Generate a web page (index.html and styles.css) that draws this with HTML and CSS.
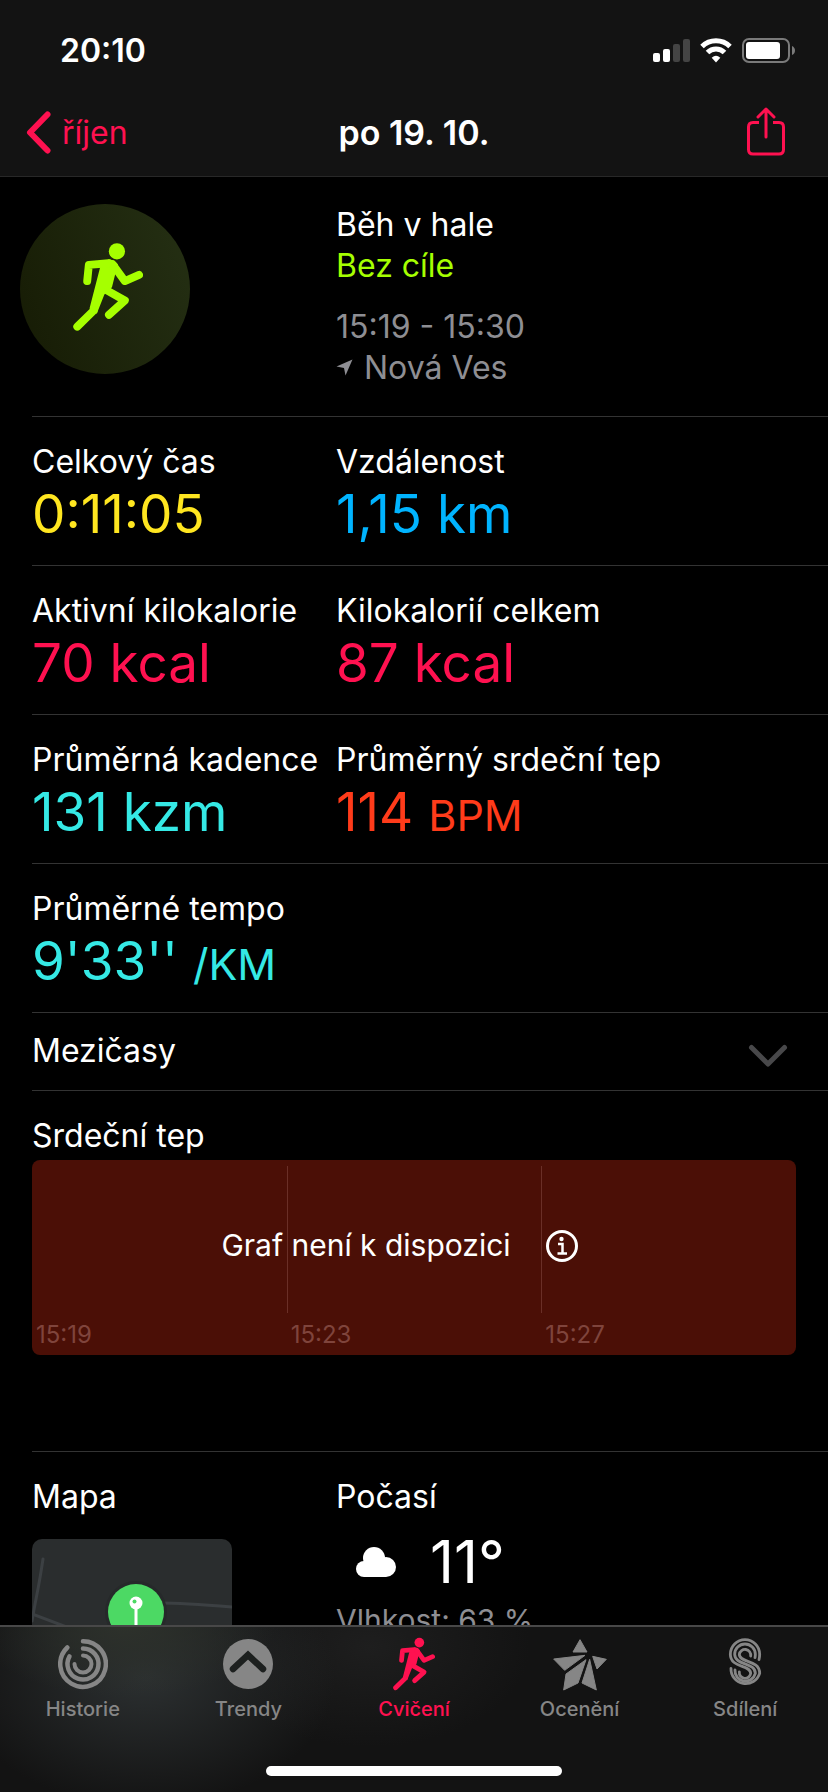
FILE: index.html
```
<!DOCTYPE html>
<html lang="cs">
<head>
  <meta charset="UTF-8">
  <meta name="viewport" content="width=device-width, initial-scale=1.0">
  <title>Cvičení</title>
  <link rel="stylesheet" href="styles.css">
</head>
<body>
  <!-- shared runner symbol -->
  <svg class="defs" aria-hidden="true">
    <symbol id="runner" viewBox="218 188 212 266">
      <circle cx="351" cy="213" r="24.500"/>
      <path d="M300 262L268 386L290 402L313 344L336 322L346 282L354 252Q342 238 326 237Z"/>
      <g fill="none" stroke="currentColor" stroke-width="24" stroke-linecap="round" stroke-linejoin="round">
        <path d="M261 303L266 254L326 249"/>
        <path d="M338 252L375 303L418 284"/>
        <path d="M322 332L375 362L327 405"/>
        <path d="M280 393L231 441"/>
      </g>
    </symbol>
  </svg>

  <header class="top">
    <div class="status">
      <span class="time">20:10</span>
      <div class="status-icons">
        <svg width="37" height="25" viewBox="0 0 37 25" fill="#fff">
          <rect x="0" y="15" width="7" height="9" rx="2"/>
          <rect x="10" y="11" width="7" height="13" rx="2"/>
          <rect x="20" y="6" width="7" height="18" rx="2" fill="#444"/>
          <rect x="30" y="1" width="7" height="23" rx="2" fill="#444"/>
        </svg>
        <svg width="32" height="25" viewBox="0 0 32 25" fill="none" stroke="#fff" stroke-width="5">
          <path d="M2 8.500A20 20 0 0 1 30 8.500"/>
          <path d="M7.500 14.500A12 12 0 0 1 24.500 14.500"/>
          <path d="M16 24.500L11.700 19.800Q16 15.500 20.300 19.800Z" fill="#fff" stroke="none"/>
        </svg>
        <svg width="53" height="25" viewBox="0 0 53 25">
          <rect x="1" y="1" width="46" height="23" rx="6" fill="none" stroke="#7a7a7a" stroke-width="2"/>
          <rect x="4" y="4" width="34" height="17" rx="3" fill="#fff"/>
          <path d="M50 8Q53 9.500 53 12.500T50 17Z" fill="#7a7a7a"/>
        </svg>
      </div>
    </div>
    <nav class="nav">
      <a class="back" href="#">
        <svg width="25" height="43" viewBox="0 0 25 43" fill="none" stroke="currentColor" stroke-width="6" stroke-linecap="round" stroke-linejoin="round"><path d="M21.500 3.500L4 21.500L21.500 39.500"/></svg>
        říjen
      </a>
      <h1>po 19. 10.</h1>
      <button class="share" aria-label="Sdílet">
        <svg width="40" height="50" viewBox="0 0 40 50" fill="none" stroke="currentColor" stroke-width="3" stroke-linecap="round" stroke-linejoin="round">
          <path d="M13 16.500H7Q2.500 16.500 2.500 21V43.500Q2.500 48 7 48H33Q37.500 48 37.500 43.500V21Q37.500 16.500 33 16.500H27" stroke-linecap="butt"/>
          <path d="M20 31V3M12 11L20 3L28 11"/>
        </svg>
      </button>
    </nav>
  </header>

  <main>
    <section class="summary">
      <div class="badge"><svg width="70" height="88"><use href="#runner"/></svg></div>
      <div class="info">
        <p>Běh v hale</p>
        <p class="goal">Bez cíle</p>
        <p class="muted hours">15:19 - 15:30</p>
        <p class="muted place">
          <svg width="17" height="17" viewBox="0 0 17 17" fill="currentColor"><path d="M16.500 0.500L9.500 16.500L8 9L0.500 7.500Z"/></svg>
          Nová Ves
        </p>
      </div>
    </section>

    <section class="row">
      <div><h2>Celkový čas</h2><p class="value yellow">0:11:05</p></div>
      <div><h2>Vzdálenost</h2><p class="value blue">1,15 km</p></div>
    </section>
    <section class="row">
      <div><h2>Aktivní kilokalorie</h2><p class="value pink">70 kcal</p></div>
      <div><h2>Kilokalorií celkem</h2><p class="value pink">87 kcal</p></div>
    </section>
    <section class="row">
      <div><h2>Průměrná kadence</h2><p class="value cyan">131 kzm</p></div>
      <div><h2>Průměrný srdeční tep</h2><p class="value red">114 <small>BPM</small></p></div>
    </section>
    <section class="row">
      <div><h2>Průměrné tempo</h2><p class="value cyan">9'33'' <small>/KM</small></p></div>
    </section>

    <button class="splits">
      Mezičasy
      <svg width="40" height="24" viewBox="0 0 40 24" fill="none" stroke="#48484a" stroke-width="5" stroke-linecap="round" stroke-linejoin="round"><path d="M3.500 3.500L20 20L36.500 3.500"/></svg>
    </button>

    <section class="heart">
      <h2>Srdeční tep</h2>
      <div class="chart">
        <div class="slot"><span>15:19</span></div>
        <div class="slot"><span>15:23</span></div>
        <div class="slot"><span>15:27</span></div>
        <div class="no-data">
          Graf není k dispozici
          <button aria-label="Informace">
            <svg width="34" height="34" viewBox="0 0 34 34" fill="none" stroke="#fff" stroke-width="3">
              <circle cx="17" cy="17" r="14.500"/>
              <circle cx="16.500" cy="10" r="2.200" fill="#fff" stroke="none"/>
              <path d="M13 15H17.500V24.500M12.500 24.500H22" stroke-width="2.500"/>
            </svg>
          </button>
        </div>
      </div>
    </section>

    <section class="row last">
      <div>
        <h2>Mapa</h2>
        <svg class="map" width="200" height="200" viewBox="0 0 200 200">
          <rect width="200" height="200" fill="#2a2d2e"/>
          <g fill="none" stroke="#3c4043" stroke-width="3" stroke-linecap="round">
            <path d="M11 20Q8 40 5 55T0 82"/>
            <path d="M0 75L40 90L80 102"/>
            <path d="M128 64Q150 64 200 68"/>
          </g>
          <circle cx="104" cy="73" r="31" fill="#26292a"/>
          <circle cx="104" cy="73" r="28" fill="#4cd964"/>
          <path d="M104 67V95" stroke="#fff" stroke-width="3"/>
          <circle cx="104" cy="64" r="6.500" fill="#fff"/>
          <circle cx="102.500" cy="62.500" r="2" fill="#4cd964"/>
        </svg>
      </div>
      <div>
        <h2>Počasí</h2>
        <p class="weather">
          <svg width="40" height="30" viewBox="0 0 40 30" fill="#fff"><circle cx="8" cy="22" r="8"/><circle cx="18" cy="11" r="11"/><circle cx="30" cy="20" r="10"/><rect x="8" y="14" width="22" height="16"/></svg>
          11°
        </p>
        <p class="muted humidity">Vlhkost: 63 %</p>
      </div>
    </section>
  </main>

  <footer>
    <nav class="tabs">
      <a href="#">
        <svg width="50" height="54" viewBox="-25 -27 50 54" fill="none" stroke="currentColor" stroke-width="4.500" stroke-linecap="round">
          <path d="M0 -22.800A22.800 22.800 0 1 1 -15.700 -16.500"/>
          <path d="M0 -15.500A15.500 15.500 0 1 1 -13.500 -7.600"/>
          <path d="M0 -8.500A8.500 8.500 0 1 1 -8.500 0" stroke-width="4"/>
        </svg>
        Historie
      </a>
      <a href="#">
        <svg width="50" height="54" viewBox="-25 -27 50 54">
          <circle r="25" fill="currentColor"/>
          <path d="M-15 5L0 -9L15 5" fill="none" stroke="#1d201f" stroke-width="6.500" stroke-linecap="round"/>
        </svg>
        Trendy
      </a>
      <a class="active" href="#">
        <svg width="42" height="54"><use href="#runner"/></svg>
        Cvičení
      </a>
      <a href="#">
        <svg width="54" height="54" viewBox="636 111 162 162" fill="currentColor" stroke="currentColor" stroke-width="3" stroke-linejoin="round">
          <path d="M717 119L738 156L696 156Z"/>
          <path d="M638 177L732 166L671 211Z"/>
          <path d="M735 179L711 249L668 270L675 222Z"/>
          <path d="M746 178L766 270L723 249Z"/>
          <path d="M755 169L796 178L768 207Z"/>
        </svg>
        Ocenění
      </a>
      <a href="#">
        <svg width="34" height="54" viewBox="1161 111 102 162" fill="none" stroke="currentColor" stroke-width="8.500" stroke-linecap="round">
          <path d="M1254 179Q1256 172 1256 163A44 44 0 0 0 1168 163C1168 205 1229 193 1229 220A17 17 0 0 1 1195 216"/>
          <path d="M1242 173Q1243 168 1243 163A31 31 0 0 0 1181 163C1181 197 1243 186 1243 220A31 31 0 0 1 1182 210"/>
          <path d="M1229 168A17 17 0 1 0 1195 163C1195 190 1256 178 1256 220A44 44 0 0 1 1170 205"/>
        </svg>
        Sdílení
      </a>
    </nav>
    <div class="home-bar"></div>
  </footer>
</body>
</html>
```
FILE: styles.css
```
* {
  box-sizing: border-box;
  margin: 0;
  padding: 0;
}
body {
  display: flex;
  flex-direction: column;
  height: 100vh;
  background: #000;
  color: #fff;
  font-family: Inter, "Liberation Sans", sans-serif;
  font-size: 32px;
  line-height: 41px;
}
svg {
  display: block;
  flex: none;
}
a {
  color: inherit;
  text-decoration: none;
}
button {
  border: 0;
  background: none;
  color: inherit;
  font: inherit;
}
h2 {
  font-size: inherit;
  font-weight: 400;
  white-space: nowrap;
}
.defs {
  position: absolute;
  width: 0;
  height: 0;
}
#runner {
  fill: currentColor;
}

/* header */
.top {
  flex: none;
  background: #131313;
  border-bottom: 1px solid #282828;
}
.status {
  display: flex;
  justify-content: space-between;
  align-items: center;
  height: 88px;
  padding: 12px 33px 0 60px;
}
.time {
  font-weight: 600;
}
.status-icons {
  display: flex;
  gap: 10px;
}
.nav {
  display: grid;
  grid-template-columns: 1fr auto 1fr;
  align-items: center;
  height: 88px;
  padding: 0 26px;
}
.nav h1 {
  font-size: 34px;
  font-weight: 600;
}
.back {
  display: flex;
  align-items: center;
  gap: 11px;
  color: #ff1150;
}
.share {
  justify-self: end;
  padding: 0 16px 3px 0;
  color: #ff1150;
}

/* content */
main {
  flex: 1;
  min-height: 0;
  overflow: hidden;
}
.summary {
  display: grid;
  grid-template-columns: 316px 1fr;
  padding: 27px 0 28px 20px;
}
.badge {
  display: flex;
  align-items: center;
  justify-content: center;
  width: 170px;
  height: 170px;
  padding: 0 0 4px 6px;
  border-radius: 50%;
  background: linear-gradient(70deg, #161b04, #253014);
  color: #a6ff00;
}
.goal {
  color: #a6ff00;
}
.muted {
  color: #8e8e93;
}
.hours {
  margin-top: 20px;
}
.place {
  display: flex;
  align-items: center;
  gap: 11px;
}
.row {
  display: grid;
  grid-template-columns: 304px 1fr;
  margin-left: 32px;
  padding: 24px 0 19px;
  border-top: 1px solid #333;
}
.value {
  font-size: 53px;
  line-height: 64px;
}
.value small {
  font-size: 43px;
  line-height: 1;
}
.yellow {
  color: #ffe620;
}
.blue {
  color: #00b4ff;
}
.pink {
  color: #ff1150;
}
.cyan {
  color: #35e9e5;
}
.red {
  color: #ff3b1a;
}
.splits {
  display: flex;
  justify-content: space-between;
  align-items: center;
  width: calc(100% - 32px);
  margin-left: 32px;
  padding: 17px 40px 19px 0;
  border-top: 1px solid #333;
}
.splits svg {
  margin-top: 10px;
}
.heart {
  margin-left: 32px;
  padding: 24px 32px 96px 0;
  border-top: 1px solid #333;
}
.chart {
  position: relative;
  display: grid;
  grid-template-columns: repeat(3, 1fr);
  height: 195px;
  margin-top: 4px;
  padding-top: 6px;
  border-radius: 8px;
  background: #4b0f06;
}
.slot {
  display: flex;
  flex-direction: column;
  color: #7f443c;
  font-size: 24px;
  line-height: 30px;
}
.slot::before {
  content: "";
  height: 147px;
  border-left: 1px solid #6a2f27;
}
.slot:first-child::before {
  border: 0;
}
.slot span {
  margin: 7px 0 0 4px;
}
.no-data {
  position: absolute;
  top: 0;
  left: 0;
  display: flex;
  align-items: center;
  justify-content: center;
  gap: 34px;
  width: 100%;
  height: 171px;
  padding-right: 28px;
  font-size: 30px;
}
.map {
  margin-top: 22px;
  border-radius: 10px;
}
.weather {
  display: flex;
  align-items: center;
  gap: 34px;
  margin-top: 13px;
  padding-left: 20px;
  font-size: 59px;
  line-height: 64px;
}
.humidity {
  margin-top: 6px;
  font-size: 30px;
}

/* tab bar */
footer {
  flex: none;
  height: 167px;
  border-top: 2px solid #484848;
  background:
    radial-gradient(ellipse 150px 70px at 125px 0, #2d312b, transparent),
    radial-gradient(ellipse 190px 130px at 145px 50px, #2c3031, transparent),
    radial-gradient(ellipse 160px 100px at 370px 20px, #1e1e1e, transparent),
    #131313;
}
.tabs {
  display: grid;
  grid-template-columns: repeat(5, 1fr);
  height: 139px;
  padding-top: 10px;
}
.tabs a {
  display: flex;
  flex-direction: column;
  align-items: center;
  gap: 6px;
  color: #868686;
  font-size: 20px;
  font-weight: 500;
  line-height: 24px;
}
.tabs .active {
  color: #ff1150;
}
.home-bar {
  width: 296px;
  height: 10px;
  margin: 0 auto;
  border-radius: 5px;
  background: #fff;
}
```
